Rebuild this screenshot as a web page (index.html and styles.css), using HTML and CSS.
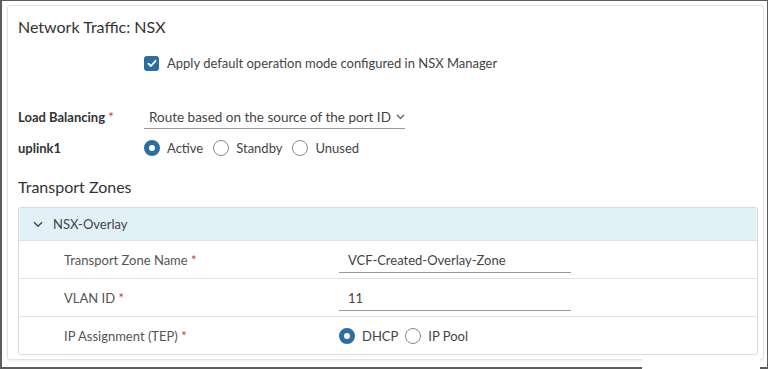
FILE: index.html
```html
<!DOCTYPE html>
<html>

<head>
  <meta charset="UTF-8">
  <meta name="viewport" content="width=device-width, initial-scale=1.0">
  <title>Network Traffic: NSX</title>
  <link rel="stylesheet" href="styles.css">
</head>

<body>

  <div class="frame">
    <div class="card">
      <h2 class="title">Network Traffic: NSX</h2>

      <div class="check-row">
        <span class="checkbox">
          <svg width="10" height="9" viewBox="0 0 10 9"><path d="M1.5 4.6 L4 7 L8.6 1.8" fill="none" stroke="#fff" stroke-width="1.8" stroke-linecap="round" stroke-linejoin="round"/></svg>
        </span>
        <span>Apply default operation mode configured in NSX Manager</span>
      </div>

      <div class="form-row lb-row">
        <label class="label">Load Balancing <span class="req">*</span></label>
        <div class="select">
          Route based on the source of the port ID
          <svg width="9" height="6" viewBox="0 0 9 6"><path d="M1 1 L4.5 4.5 L8 1" fill="none" stroke="#555" stroke-width="1.2"/></svg>
        </div>
      </div>

      <div class="form-row uplink-row">
        <label class="label">uplink1</label>
        <div class="radios">
          <span class="radio on"></span><span class="radio-text">Active</span>
          <span class="radio"></span><span class="radio-text">Standby</span>
          <span class="radio"></span><span class="radio-text">Unused</span>
        </div>
      </div>

      <h3 class="subtitle">Transport Zones</h3>

      <div class="panel">
        <div class="panel-head">
          <svg class="chevron" width="10" height="7" viewBox="0 0 10 7"><path d="M1 1.2 L5 5.2 L9 1.2" fill="none" stroke="#444" stroke-width="1.4"/></svg>
          NSX-Overlay
        </div>
        <div class="panel-row">
          <span class="panel-label">Transport Zone Name <span class="req">*</span></span>
          <div class="input">VCF-Created-Overlay-Zone</div>
        </div>
        <div class="panel-row">
          <span class="panel-label">VLAN ID <span class="req">*</span></span>
          <div class="input">11</div>
        </div>
        <div class="panel-row">
          <span class="panel-label">IP Assignment (TEP) <span class="req">*</span></span>
          <div class="radios">
            <span class="radio on"></span><span class="radio-text">DHCP</span>
            <span class="radio"></span><span class="radio-text">IP Pool</span>
          </div>
        </div>
      </div>
    </div>
    <div class="patch"></div>
  </div>

</body>

</html>
```

FILE: styles.css
```css
html, body {
  margin: 0;
  padding: 0;
}

body {
  font-family: Lato, "Open Sans", sans-serif;
  color: #333;
  background: #fff;
}

.frame {
  position: relative;
  box-sizing: border-box;
  width: 768px;
  height: 369px;
  border: 2px solid #5c5c5c;
  border-top-width: 1px;
  border-right-width: 1px;
  padding: 4px 3px 0 5px;
}

.card {
  box-sizing: border-box;
  height: 355px;
  border: 1px solid #e3e3e3;
  border-radius: 3px;
  box-shadow: 0 1px 2px rgba(0, 0, 0, 0.08);
  padding: 10px 5px 0 10px;
}

.title {
  margin: 0;
  font-size: 16px;
  font-weight: normal;
  line-height: 22px;
  color: #333;
}

.check-row {
  display: flex;
  align-items: center;
  height: 24px;
  margin: 13px 0 0 126px;
  font-size: 13px;
  color: #444;
}

.checkbox {
  display: flex;
  align-items: center;
  justify-content: center;
  width: 15px;
  height: 15px;
  border-radius: 3px;
  background: #2a6f9f;
  margin-right: 8px;
}

.form-row {
  display: flex;
  align-items: center;
}

.label {
  width: 126px;
  font-size: 13px;
  font-weight: bold;
  color: #333;
}

.req {
  color: #d0362a;
  font-weight: normal;
}

.lb-row {
  margin-top: 30px;
  height: 24px;
}

.select {
  display: flex;
  align-items: center;
  gap: 5px;
  box-sizing: border-box;
  width: 261px;
  height: 24px;
  padding-left: 5px;
  border-bottom: 1px solid #9a9a9a;
  font-size: 13.5px;
  color: #444;
}

.uplink-row {
  margin-top: 7px;
  height: 24px;
}

.radios {
  display: flex;
  align-items: center;
  font-size: 13px;
  color: #444;
}

.radio {
  box-sizing: border-box;
  width: 16px;
  height: 16px;
  border-radius: 50%;
  border: 1px solid #8a8a8a;
  background: #fff;
  margin-right: 7px;
}

.radio.on {
  border: 5px solid #2a6f9f;
}

.radio-text {
  margin-right: 10px;
}

.panel-row .radio-text {
  margin-right: 7px;
}

.subtitle {
  margin: 16px 0 0;
  font-size: 16px;
  font-weight: normal;
  line-height: 22px;
  color: #333;
}

.panel {
  margin-top: 9px;
  border: 1px solid #dcdcdc;
  border-radius: 3px;
}

.panel-head {
  display: flex;
  align-items: center;
  height: 32px;
  background: #e1f1f7;
  font-size: 13px;
  color: #444;
}

.chevron {
  margin: 0 10px 0 14px;
}

.panel-row {
  display: flex;
  align-items: center;
  height: 37px;
  border-top: 1px solid #e2e2e2;
  padding-left: 45px;
  font-size: 13px;
  color: #555;
}

.panel-label {
  width: 275px;
}

.input {
  box-sizing: border-box;
  width: 232px;
  height: 24px;
  line-height: 22px;
  padding-left: 9px;
  border-bottom: 1px solid #9a9a9a;
  margin-top: 3px;
  color: #444;
}

.patch {
  position: absolute;
  left: 640px;
  bottom: -2px;
  width: 118px;
  height: 13px;
  background: #fff;
}
```
